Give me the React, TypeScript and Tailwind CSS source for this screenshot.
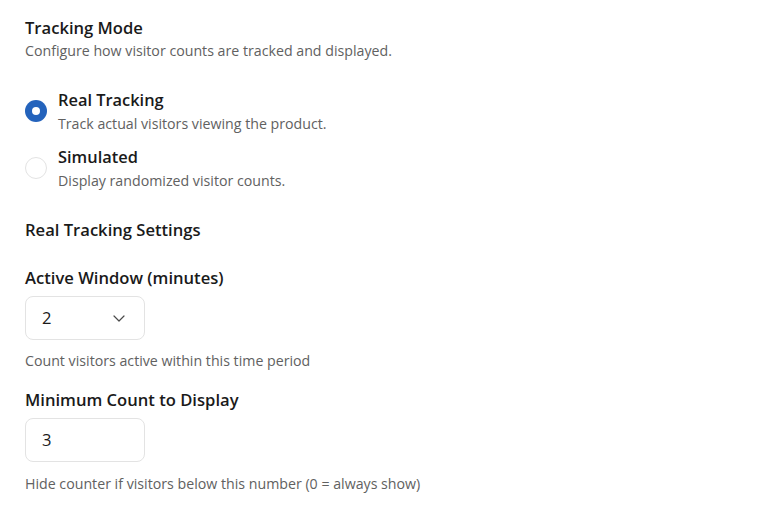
import React from 'react';

const font = { fontFamily: '"Open Sans", "Noto Sans", sans-serif' };

const Radio: React.FC<{ checked: boolean; label: string; help: string }> = ({ checked, label, help }) => {
    return (
        <label className="flex items-center gap-[11px]">
            {checked ? (
                <span className="w-[22px] h-[22px] rounded-full bg-[#2463bc] flex items-center justify-center shrink-0">
                    <span className="w-[8px] h-[8px] rounded-full bg-white" />
                </span>
            ) : (
                <span className="w-[22px] h-[22px] rounded-full border border-[#e3e3e3] bg-white shrink-0" />
            )}
            <span className="flex flex-col">
                <span className="text-[16.4px] leading-[24px] font-semibold text-[#1a1a1a]">{label}</span>
                <span className="mt-[2px] text-[14.2px] leading-[20px] text-[#616161]">{help}</span>
            </span>
        </label>
    );
};

export default function App() {
    return (
        <div className="bg-white w-[783px] h-[515px] px-[25px] pt-[16px]" style={font}>
            <h2 className="text-[16.6px] leading-[24px] font-semibold text-[#1a1a1a]">Tracking Mode</h2>
            <p className="mt-[1px] text-[14.2px] leading-[20px] text-[#616161]">Configure how visitor counts are tracked and displayed.</p>

            <div className="flex flex-col gap-[11px] mt-[27px]">
                <Radio checked label="Real Tracking" help="Track actual visitors viewing the product." />
                <Radio checked={false} label="Simulated" help="Display randomized visitor counts." />
            </div>

            <h3 className="mt-[27px] text-[16.6px] leading-[24px] font-semibold text-[#1a1a1a]">Real Tracking Settings</h3>

            <div className="mt-[24px]">
                <div className="text-[16.6px] leading-[24px] font-semibold text-[#1a1a1a]">Active Window (minutes)</div>
                <div className="mt-[6px] w-[120px] h-[44px] rounded-[8px] border border-[#e3e3e3] flex items-center justify-between pl-[16px] pr-[18px]">
                    <span className="text-[16.6px] text-[#1a1a1a]">2</span>
                    <svg width="14" height="14" viewBox="0 0 14 14" fill="none">
                        <path d="M2 5l5 5 5-5" stroke="#4a4a4a" strokeWidth="1.2" strokeLinecap="round" strokeLinejoin="round" />
                    </svg>
                </div>
                <p className="mt-[11px] text-[14.2px] leading-[20px] text-[#616161]">Count visitors active within this time period</p>
            </div>

            <div className="mt-[17px]">
                <div className="text-[16.6px] leading-[24px] font-semibold text-[#1a1a1a]">Minimum Count to Display</div>
                <div className="mt-[6px] w-[120px] h-[44px] rounded-[8px] border border-[#e3e3e3] flex items-center pl-[16px]">
                    <span className="text-[16.6px] text-[#1a1a1a]">3</span>
                </div>
                <p className="mt-[12px] text-[14.2px] leading-[20px] text-[#616161]">Hide counter if visitors below this number (0 = always show)</p>
            </div>
        </div>
    );
}
